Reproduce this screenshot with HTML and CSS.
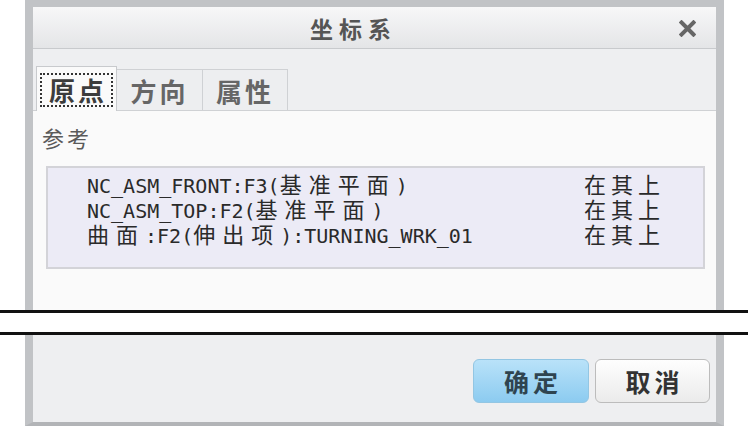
FILE: index.html
```html
<!DOCTYPE html>
<html lang="zh-CN">
<head>
  <meta charset="UTF-8" />
  <meta name="viewport" content="width=device-width, initial-scale=1.0" />
  <title>坐标系</title>
  <link rel="stylesheet" href="styles.css">
</head>
<body>
  <div class="dialog dialog-top">
    <div class="titlebar">
      <div class="title">坐标系</div>
      <div class="close">
        <svg width="17" height="17" viewBox="0 0 17 17">
          <path d="M2.5 2.5 L14.5 14.5 M14.5 2.5 L2.5 14.5" stroke="#666" stroke-width="4" stroke-linecap="square" fill="none"/>
        </svg>
      </div>
    </div>

    <div class="tabs">
      <div class="tab active"><span class="focus">原点</span></div>
      <div class="tab">方向</div>
      <div class="tab">属性</div>
    </div>

    <div class="content">
      <div class="label">参考</div>
      <div class="refs">
        <div class="ref-row">
          <span class="ref-name">NC_ASM_FRONT:F3(<span class="cjk">基准平面</span>)</span>
          <span class="ref-state cjk">在其上</span>
        </div>
        <div class="ref-row">
          <span class="ref-name">NC_ASM_TOP:F2(<span class="cjk">基准平面</span>)</span>
          <span class="ref-state cjk">在其上</span>
        </div>
        <div class="ref-row">
          <span class="ref-name"><span class="cjk">曲面</span>:F2(<span class="cjk">伸出项</span>):TURNING_WRK_01</span>
          <span class="ref-state cjk">在其上</span>
        </div>
      </div>
    </div>
  </div>

  <div class="cut"></div>

  <div class="dialog dialog-bottom">
    <div class="footer">
      <button class="btn btn-ok">确定</button>
      <button class="btn btn-cancel">取消</button>
    </div>
  </div>
</body>
</html>
```

FILE: styles.css
```css
body {
  margin: 0;
  width: 748px;
  height: 431px;
  overflow: hidden;
  background-color: #fff;
  font-family: "Noto Sans CJK SC", "DejaVu Sans", sans-serif;
}

.dialog {
  margin-left: 25px;
  width: 683px;
  border-left: 8px solid #c1c3c6;
  border-right: 8px solid #c1c3c6;
}

.dialog-top {
  border-top: 7px solid #c1c3c6;
}

.dialog-bottom {
  border-bottom: 4px solid #b2b4b7;
}

.titlebar {
  height: 41px;
  display: flex;
  align-items: center;
  border-bottom: 1px solid #c8cacd;
  background: linear-gradient(#f7f7f8, #e4e5e7);
}

.title {
  flex: 1;
  padding-left: 16px;
  text-align: center;
  font-size: 23px;
  font-weight: bold;
  letter-spacing: 6px;
  color: #555;
}

.close {
  width: 58px;
  display: flex;
  justify-content: center;
  padding-top: 2px;
}

.tabs {
  height: 61px;
  display: flex;
  align-items: flex-end;
  padding-left: 3px;
  background-color: #eeeff1;
}

.tab {
  height: 41px;
  width: 86px;
  box-sizing: border-box;
  display: flex;
  align-items: center;
  justify-content: center;
  border: 1px solid #cfd1d4;
  border-bottom: 0;
  background-color: #edeef0;
  font-size: 26px;
  font-weight: bold;
  letter-spacing: 3px;
  color: #666;
}

.tab + .tab {
  border-left: 0;
}

.tab:nth-child(3) {
  width: 85px;
}

.tab.active {
  width: 81px;
  height: 45px;
  margin-bottom: -1px;
  background-color: #fafafa;
  border-color: #c8cacd;
  color: #3c3c3c;
}

.focus {
  width: 66px;
  height: 30px;
  display: flex;
  align-items: center;
  justify-content: center;
  padding-left: 3px;
  border: 2px dotted #333;
  margin-top: 1px;
}

.content {
  height: 200px;
  box-sizing: border-box;
  border-top: 1px solid #cfd1d4;
  background-color: #fafafa;
  padding: 12px 0 0 9px;
}

.label {
  font-size: 22px;
  line-height: 28px;
  letter-spacing: 3px;
  color: #5a5a5a;
}

.refs {
  margin: 15px 0 0 4px;
  width: 659px;
  height: 103px;
  box-sizing: border-box;
  border: 2px solid #d3d3d8;
  background-color: #ecebf6;
  padding-top: 3px;
  font-family: "DejaVu Sans Mono", "Noto Sans CJK SC", monospace;
  font-size: 20px;
  color: #2a2a2a;
}

.ref-row {
  display: grid;
  grid-template-columns: 497px 1fr;
  padding-left: 39px;
  height: 25px;
  line-height: 25px;
  white-space: nowrap;
}

.cjk {
  font-family: "Noto Sans CJK SC", sans-serif;
  font-size: 22px;
  letter-spacing: 7px;
}

.ref-state {
  letter-spacing: 5px;
}

.cut {
  height: 19px;
  border-top: 3px solid #111;
  border-bottom: 3px solid #111;
  background-color: #fff;
}

.footer {
  height: 87px;
  box-sizing: border-box;
  background-color: #eeeff1;
  display: flex;
  justify-content: flex-end;
  align-items: flex-start;
  gap: 6px;
  padding: 24px 6px 0 0;
}

.btn {
  height: 44px;
  width: 116px;
  border-radius: 6px;
  font-family: "Noto Sans CJK SC", sans-serif;
  font-size: 25px;
  font-weight: bold;
  letter-spacing: 4px;
  padding: 0 0 0 4px;
  cursor: pointer;
}

.btn-ok {
  border: 1px solid #93c6e3;
  background: linear-gradient(#b9e2f9, #8ccbf0);
  color: #2f4450;
}

.btn-cancel {
  width: 115px;
  border: 1px solid #bcbcbc;
  background: linear-gradient(#fefefe, #ebebeb);
  color: #333;
}
```
